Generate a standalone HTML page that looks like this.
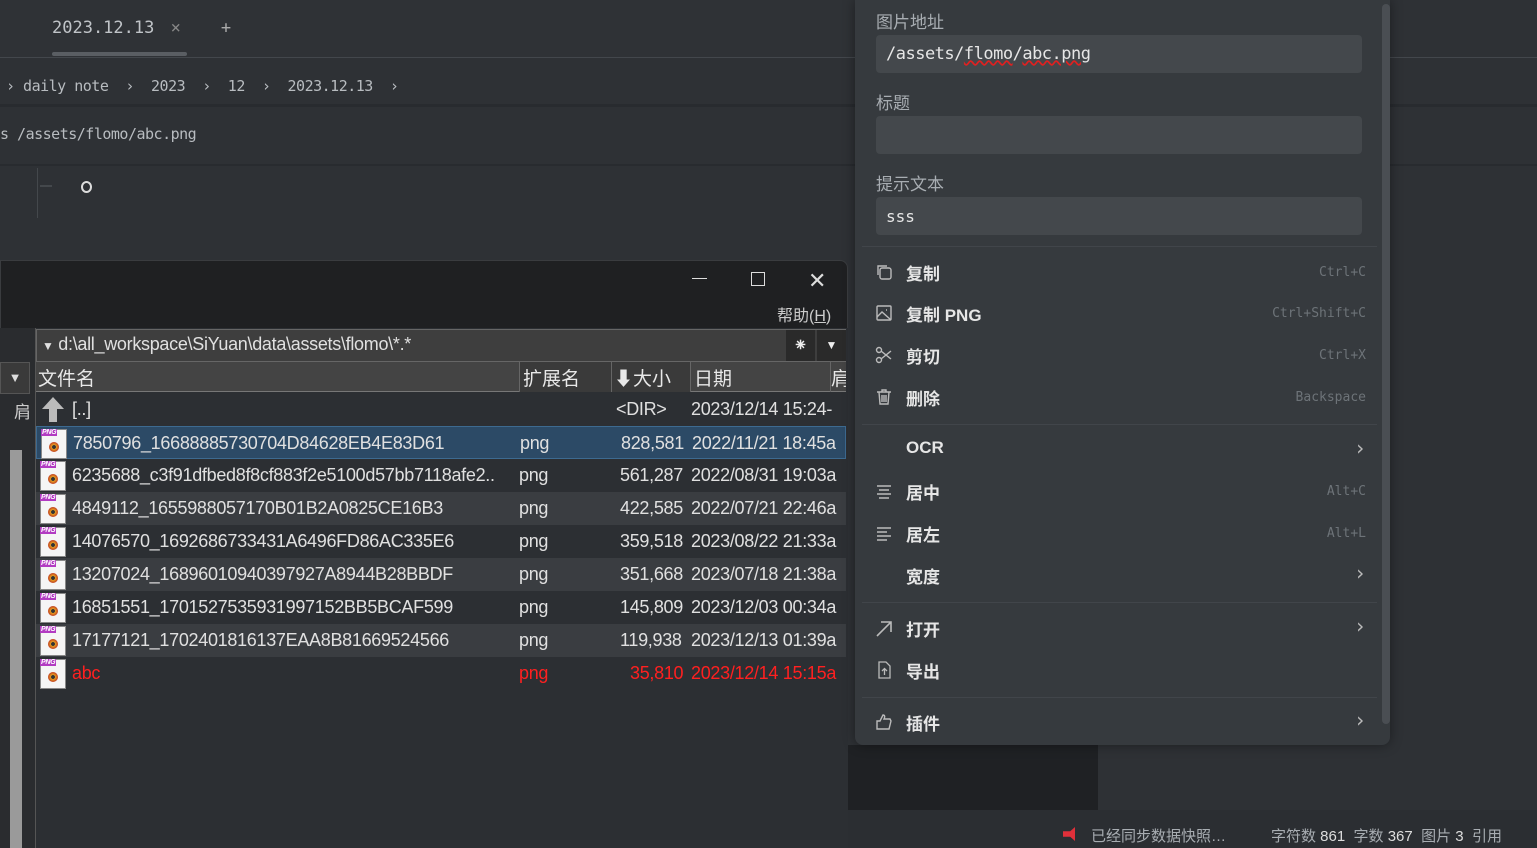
<!DOCTYPE html>
<html><head><meta charset="utf-8"><style>
*{box-sizing:border-box;margin:0;padding:0}
body{width:1537px;height:848px;overflow:hidden;background:#2e3135;font-family:"Liberation Sans","Noto Sans CJK SC",sans-serif;position:relative;color:#c9cdd1}
.a{position:absolute}
.mono{font-family:"DejaVu Sans Mono","Liberation Mono","Noto Sans CJK SC",monospace}
.row{position:absolute;left:36px;width:810px;height:33px;font-size:18px;font-family:"Liberation Sans","Noto Sans CJK SC",sans-serif;color:#e0e0e0;letter-spacing:-0.3px}
.row span{position:absolute;top:6px;white-space:nowrap}
.ico{position:absolute;left:4px;top:2px;width:26px;height:30px;background:#f5f5f5;border:1px solid #888}
.ico:before{content:"PNG";position:absolute;left:-1px;top:-1px;background:#b23bc2;color:#fff;font-size:7px;padding:0 1px;font-weight:bold}
.ico:after{content:"";position:absolute;left:7px;top:12px;width:10px;height:10px;border-radius:50%;background:radial-gradient(#333 25%,#e8a020 30%,#c04020 70%)}
.mi{position:absolute;left:875px;width:495px;height:36px;font-size:17px;color:#e6e6e6;font-weight:bold}
.mi .t{position:absolute;left:31px;top:6px}
.mi .k{position:absolute;right:4px;top:11px;font-size:13px;color:#6d7378;font-family:"DejaVu Sans Mono",monospace;font-weight:normal}
.mi .k.c{font-size:20px;color:#bbb;top:4px}
.mi svg{position:absolute;left:0;top:9px}
.sep{position:absolute;left:862px;width:515px;height:1px;background:#41454a}
.lbl{position:absolute;left:876px;font-size:17px;color:#a8adb2}
.inp{position:absolute;left:876px;width:486px;height:38px;background:#44484c;border-radius:4px}
</style></head><body>
<div class="a" style="left:0;top:0;width:855px;height:57px;background:#2f3236"></div>
<div class="a mono" style="left:52px;top:18px;font-size:17px;color:#c0c4c8">2023.12.13 <span style="color:#888;margin-left:6px">×</span><span style="margin-left:40px;color:#aaa">+</span></div>
<div class="a" style="left:52px;top:52px;width:135px;height:4px;background:#5a5e63;border-radius:2px"></div>
<div class="a" style="left:0;top:57px;width:1537px;height:1px;background:#43474c"></div>
<div class="a mono" style="left:6px;top:77px;font-size:15px;color:#b8bcc0;letter-spacing:-0.5px">›&nbsp;daily note&nbsp;&nbsp;›&nbsp;&nbsp;2023&nbsp;&nbsp;›&nbsp;&nbsp;12&nbsp;&nbsp;›&nbsp;&nbsp;2023.12.13&nbsp;&nbsp;›</div>
<div class="a" style="left:0;top:104px;width:1537px;height:3px;background:#282b2f"></div>
<div class="a mono" style="left:0;top:125px;font-size:15px;color:#b8bcc0;letter-spacing:-0.5px">s /assets/flomo/abc.png</div>
<div class="a" style="left:0;top:164px;width:1537px;height:2px;background:#282b2f"></div>
<div class="a" style="left:37px;top:168px;width:1px;height:50px;background:#44484c"></div>
<div class="a" style="left:40px;top:185px;width:12px;height:2px;background:#44484c"></div>
<div class="a" style="left:81px;top:181px;width:11px;height:12px;border:2px solid #ddd;border-radius:50%"></div>
<!-- bottom right -->
<div class="a" style="left:848px;top:745px;width:250px;height:65px;background:#1f2124"></div>
<div class="a" style="left:848px;top:810px;width:689px;height:38px;background:#2b2e32"></div>
<div class="a" style="left:1063px;top:827px;width:12px;height:14px;background:#e0303a;clip-path:polygon(0 30%,60% 30%,100% 0,100% 100%,60% 70%,0 70%)"></div>
<div class="a" style="left:1091px;top:825px;font-size:15px;color:#a8adb2;white-space:nowrap">已经同步数据快照…</div>
<div class="a" style="left:1271px;top:825px;font-size:15px;color:#a8adb2;white-space:nowrap">字符数 <span style="color:#ddd">861</span>&nbsp; 字数 <span style="color:#ddd">367</span>&nbsp; 图片 <span style="color:#ddd">3</span>&nbsp; 引用</div>
<!-- file window -->
<div class="a" style="left:0;top:260px;width:848px;height:588px;background:#1f2022;border:1px solid #3a3c3f;border-radius:0 8px 0 0"></div>
<div class="a" style="left:692px;top:278px;width:15px;height:1px;background:#ddd"></div>
<div class="a" style="left:751px;top:272px;width:14px;height:14px;border:1.5px solid #ddd"></div>
<div class="a" style="left:808px;top:268px;font-size:22px;color:#ddd">✕</div>
<div class="a" style="left:777px;top:302px;font-size:16px;color:#ccc">帮助(<u>H</u>)</div>
<div class="a" style="left:0;top:328px;width:848px;height:520px;background:#2c2f33"></div>
<div class="a" style="left:0;top:328px;width:36px;height:520px;background:#2a2c2f;border-right:1px solid #555"></div>
<div class="a" style="left:0;top:362px;width:30px;height:32px;background:#3a3a3a;border:1px solid #555;color:#ddd;font-size:13px;text-align:center;line-height:30px">▼</div>
<div class="a" style="left:14px;top:398px;font-size:17px;color:#ccc">肩</div>
<div class="a" style="left:10px;top:450px;width:12px;height:398px;background:#9a9a9a"></div>
<div class="a" style="left:36px;top:329px;width:810px;height:33px;background:#3e3e3e;border:1px solid #666"></div>
<div class="a" style="left:42px;top:334px;font-size:18px;color:#e0e0e0;letter-spacing:-0.3px"><span style="font-size:12px">▼</span> d:\all_workspace\SiYuan\data\assets\flomo\*.*</div>
<div class="a" style="left:786px;top:330px;width:29px;height:31px;background:#2a2a2a;color:#eee;text-align:center;line-height:31px;font-size:18px">⁕</div>
<div class="a" style="left:817px;top:330px;width:29px;height:31px;background:#2a2a2a;color:#eee;text-align:center;line-height:31px;font-size:12px">▼</div>
<div class="a" style="left:36px;top:362px;width:810px;height:30px;background:#444;border-bottom:1px solid #777"></div>
<div class="a" style="left:38px;top:364px;font-size:19px;color:#e8e8e8">文件名</div>
<div class="a" style="left:519px;top:362px;width:92px;height:30px;background:#3a3a3a;border-left:1px solid #666"></div>
<div class="a" style="left:523px;top:364px;font-size:19px;color:#e8e8e8">扩展名</div>
<div class="a" style="left:611px;top:362px;width:79px;height:30px;background:#3a3a3a;border-left:1px solid #666"></div>
<div class="a" style="left:614px;top:364px;font-size:19px;color:#e8e8e8">⬇大小</div>
<div class="a" style="left:690px;top:362px;width:140px;height:30px;border-left:1px solid #666"></div>
<div class="a" style="left:694px;top:364px;font-size:19px;color:#e8e8e8">日期</div>
<div class="a" style="left:830px;top:362px;width:16px;height:30px;border-left:1px solid #666;font-size:19px;color:#e8e8e8;padding-top:2px;overflow:hidden">肩</div>
<div class="row" style="top:393px"><svg class="a" style="left:4px;top:2px" width="26" height="28"><path d="M13 2 L24 14 H17 V27 H9 V14 H2 Z" fill="#bbb"/></svg><span style="left:36px">[..]</span><span style="left:580px">&lt;DIR&gt;</span><span style="left:655px">2023/12/14 15:24-</span></div>
<div class="row" style="top:426px;background:#2c4a66;border:1px solid #3d6a90"><i class="ico"></i><span style="left:36px">7850796_16688885730704D84628EB4E83D61</span><span style="left:483px">png</span><span style="left:584px">828,581</span><span style="left:655px">2022/11/21 18:45a</span></div>
<div class="row" style="top:459px"><i class="ico"></i><span style="left:36px">6235688_c3f91dfbed8f8cf883f2e5100d57bb7118afe2..</span><span style="left:483px">png</span><span style="left:584px">561,287</span><span style="left:655px">2022/08/31 19:03a</span></div>
<div class="row" style="top:492px;background:#3a3d41"><i class="ico"></i><span style="left:36px">4849112_1655988057170B01B2A0825CE16B3</span><span style="left:483px">png</span><span style="left:584px">422,585</span><span style="left:655px">2022/07/21 22:46a</span></div>
<div class="row" style="top:525px"><i class="ico"></i><span style="left:36px">14076570_1692686733431A6496FD86AC335E6</span><span style="left:483px">png</span><span style="left:584px">359,518</span><span style="left:655px">2023/08/22 21:33a</span></div>
<div class="row" style="top:558px;background:#3a3d41"><i class="ico"></i><span style="left:36px">13207024_16896010940397927A8944B28BBDF</span><span style="left:483px">png</span><span style="left:584px">351,668</span><span style="left:655px">2023/07/18 21:38a</span></div>
<div class="row" style="top:591px"><i class="ico"></i><span style="left:36px">16851551_1701527535931997152BB5BCAF599</span><span style="left:483px">png</span><span style="left:584px">145,809</span><span style="left:655px">2023/12/03 00:34a</span></div>
<div class="row" style="top:624px;background:#3a3d41"><i class="ico"></i><span style="left:36px">17177121_1702401816137EAA8B81669524566</span><span style="left:483px">png</span><span style="left:584px">119,938</span><span style="left:655px">2023/12/13 01:39a</span></div>
<div class="row" style="top:657px;color:#ff2020"><i class="ico"></i><span style="left:36px">abc</span><span style="left:483px">png</span><span style="left:594px">35,810</span><span style="left:655px">2023/12/14 15:15a</span></div>
<!-- menu -->
<div class="a" style="left:855px;top:0;width:535px;height:745px;background:#363a3e;border-radius:0 0 8px 8px;box-shadow:0 0 12px rgba(0,0,0,.4)"></div>
<div class="a" style="left:1382px;top:4px;width:8px;height:720px;background:#4a4e53;border-radius:4px"></div>
<div class="lbl" style="top:8px">图片地址</div>
<div class="inp" style="top:35px"></div>
<div class="a mono" style="left:886px;top:44px;font-size:17px;color:#e6e6e6;letter-spacing:-0.5px">/assets/<span style="text-decoration:underline wavy #e02020">flomo</span>/<span style="text-decoration:underline wavy #e02020">abc.png</span></div>
<div class="lbl" style="top:89px">标题</div>
<div class="inp" style="top:116px"></div>
<div class="lbl" style="top:170px">提示文本</div>
<div class="inp" style="top:197px"></div>
<div class="a mono" style="left:886px;top:207px;font-size:16px;color:#e6e6e6">sss</div>
<div class="sep" style="top:246px"></div>
<div class="mi" style="top:254px"><svg width="18" height="18" fill="none" stroke="#bbb" stroke-width="1.4"><rect x="5" y="5" width="11" height="11" rx="2"/><path d="M3 12V3h9"/></svg><span class="t">复制</span><span class="k">Ctrl+C</span></div>
<div class="mi" style="top:295px"><svg width="18" height="18" fill="none" stroke="#bbb" stroke-width="1.4"><rect x="2" y="2" width="14" height="14" rx="1"/><path d="M2 13l5-5 9 8M11 6h1"/></svg><span class="t">复制 PNG</span><span class="k">Ctrl+Shift+C</span></div>
<div class="mi" style="top:337px"><svg width="18" height="18" fill="none" stroke="#bbb" stroke-width="1.4"><circle cx="4" cy="4" r="2.5"/><circle cx="4" cy="14" r="2.5"/><path d="M6 5l10 8M6 13l10-8"/></svg><span class="t">剪切</span><span class="k">Ctrl+X</span></div>
<div class="mi" style="top:379px"><svg width="18" height="18" fill="none" stroke="#bbb" stroke-width="1.4"><path d="M2 4h14M7 4V2h4v2M4 4l1 12h8l1-12M7 7v7M9 7v7M11 7v7"/></svg><span class="t">删除</span><span class="k">Backspace</span></div>
<div class="sep" style="top:424px"></div>
<div class="mi" style="top:432px"><span class="t">OCR</span><span class="k c">›</span></div>
<div class="mi" style="top:473px"><svg width="18" height="18" stroke="#bbb" stroke-width="1.6"><path d="M2 4h14M4 8h10M2 12h14M4 16h10"/></svg><span class="t">居中</span><span class="k">Alt+C</span></div>
<div class="mi" style="top:515px"><svg width="18" height="18" stroke="#bbb" stroke-width="1.6"><path d="M2 4h14M2 8h10M2 12h14M2 16h10"/></svg><span class="t">居左</span><span class="k">Alt+L</span></div>
<div class="mi" style="top:557px"><span class="t">宽度</span><span class="k c">›</span></div>
<div class="sep" style="top:602px"></div>
<div class="mi" style="top:610px"><svg width="18" height="18" fill="none" stroke="#bbb" stroke-width="1.6"><path d="M2 17L16 3M6 3h10v10"/></svg><span class="t">打开</span><span class="k c">›</span></div>
<div class="mi" style="top:652px"><svg width="18" height="18" fill="none" stroke="#bbb" stroke-width="1.3"><path d="M4 1h7l4 4v12H4zM9.5 14V8M7 10l2.5-2.5L12 10"/></svg><span class="t">导出</span></div>
<div class="sep" style="top:697px"></div>
<div class="mi" style="top:704px"><svg width="18" height="18" fill="none" stroke="#bbb" stroke-width="1.4"><path d="M2 16V8h3l3-6c2 0 2 2 1 4h6l1 2-2 8z"/></svg><span class="t">插件</span><span class="k c">›</span></div>
</body></html>
